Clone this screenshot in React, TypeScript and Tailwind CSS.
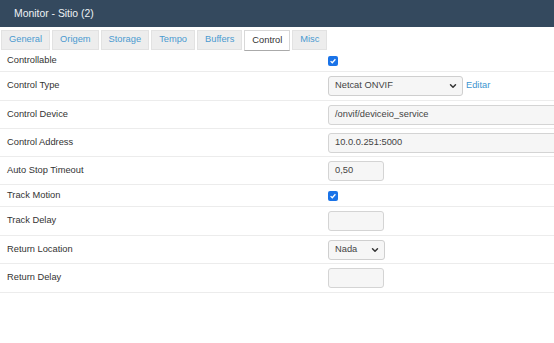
import { ChevronDown } from "lucide-react"

const tabs = ["General", "Origem", "Storage", "Tempo", "Buffers", "Control", "Misc"]

function Check() {
    return (
        <span className="flex w-[10px] h-[10px] items-center justify-center rounded-[2px] bg-[#1a73e8]">
            <svg viewBox="0 0 10 10" className="w-[8px] h-[8px]">
                <path d="M2 5.2 L4.1 7.2 L8 2.8" fill="none" stroke="white" strokeWidth="1.6" />
            </svg>
        </span>
    )
}

function Field({ value = "", width }: { value?: string, width: string }) {
    return (
        <div className={`${width} h-[20px] rounded-[3px] border border-[#d4d4d4] bg-[#f6f6f6] px-[6px] flex items-center text-[#444] shrink-0`}>
            {value}
        </div>
    )
}

function Select({ value, width }: { value: string, width: string }) {
    return (
        <div className={`${width} h-[20px] rounded-[3px] border border-[#cfcfcf] bg-[#f6f6f6] pl-[6px] pr-[4px] flex items-center justify-between text-[#444] shrink-0`}>
            <span>{value}</span>
            <ChevronDown size={10} strokeWidth={3.5} className="text-[#333]" />
        </div>
    )
}

type Row = { label: string, h: string, control: React.ReactNode }

const rows: Row[] = [
    { label: "Controllable", h: "h-[22px]", control: <Check /> },
    {
        label: "Control Type", h: "h-[29px]", control: (
            <div className="flex items-center gap-[3px]">
                <Select value="Netcat ONVIF" width="w-[135px]" />
                <span className="text-[#3c95d0]">Editar</span>
            </div>
        )
    },
    { label: "Control Device", h: "h-[28px]", control: <Field value="/onvif/deviceio_service" width="w-[260px]" /> },
    { label: "Control Address", h: "h-[28px]", control: <Field value="10.0.0.251:5000" width="w-[260px]" /> },
    { label: "Auto Stop Timeout", h: "h-[28px]", control: <Field value="0,50" width="w-[56px]" /> },
    { label: "Track Motion", h: "h-[22px]", control: <Check /> },
    { label: "Track Delay", h: "h-[29px]", control: <Field width="w-[56px]" /> },
    { label: "Return Location", h: "h-[28px]", control: <Select value="Nada" width="w-[57px]" /> },
    { label: "Return Delay", h: "h-[29px]", control: <Field width="w-[56px]" /> },
]

export default function App() {
    return (
        <div className="w-[554px] h-[343px] overflow-hidden bg-white font-['Liberation_Sans',Arial,sans-serif] text-[9.3px]">
            <div className="h-[27px] bg-[#34495e] flex items-center px-[14px] text-[10.4px] text-[#eef2f5]">
                Monitor - Sitio (2)
            </div>
            <div className="flex gap-[2px] pt-[3px] px-[1px] h-[23px]">
                {tabs.map((tab) => (
                    tab === "Control" ? (
                        <div key={tab} className="h-[21px] px-[7px] flex items-center border border-[#d8d8d8] border-b-[#aaa] border-b-dotted bg-white text-[#333]">{tab}</div>
                    ) : (
                        <div key={tab} className="h-[20px] px-[7px] flex items-center border border-[#e2e2e2] bg-[#ededed] text-[#4b9ad0]">{tab}</div>
                    )
                ))}
            </div>
            <div className="w-[554px]">
                {rows.map((row) => (
                    <div key={row.label} className={`${row.h} flex items-center border-b border-[#ececec]`}>
                        <div className="w-[328px] pl-[7px] text-[#333] shrink-0">{row.label}</div>
                        {row.control}
                    </div>
                ))}
            </div>
        </div>
    )
}
